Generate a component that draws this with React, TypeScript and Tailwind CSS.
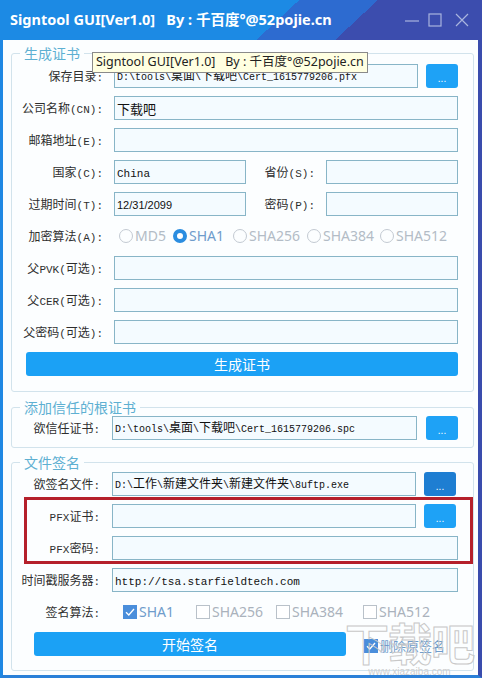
import React from 'react';

const isWide = (ch: string) => ch.charCodeAt(0) > 0xff;

// SimSun-style text: full-width glyphs at 12px, half-width ascii in mono
const Mixed: React.FC<{ text: string; big?: string; small?: string }> = ({ text, big = 'text-[12px]', small = 'text-[11px]' }) => {
    const runs: { s: string; w: boolean }[] = [];
    for (const ch of text) {
        const w = isWide(ch);
        const last = runs[runs.length - 1];
        if (last && last.w === w) last.s += ch;
        else runs.push({ s: ch, w });
    }
    return (
        <>
            {runs.map((r, i) => (
                <span
                    key={i}
                    className={r.w ? `font-['Noto_Sans_CJK_SC',sans-serif] ${big}` : `font-['Liberation_Mono',monospace] ${small}`}
                >
                    {r.s}
                </span>
            ))}
        </>
    );
};

const Label: React.FC<{ text: string; className: string }> = ({ text, className }) => (
    <div className={`flex h-6 shrink-0 items-center justify-end whitespace-pre text-[#2e2e2e] ${className}`}>
        <span className="leading-[14px]">
            <Mixed text={text} />
        </span>
    </div>
);

const Field: React.FC<{ children?: React.ReactNode; className?: string }> = ({ children, className = 'flex-1' }) => (
    <div className={`flex h-6 min-w-0 items-center overflow-hidden whitespace-pre border border-[#88b5c7] bg-[#f4fbff] pl-[2px] leading-[14px] text-[#111] ${className}`}>
        <span className="leading-[14px]">{children}</span>
    </div>
);

const Dots: React.FC<{ dark?: boolean; className?: string }> = ({ dark, className = '' }) => (
    <div
        className={`flex h-6 w-8 shrink-0 items-end justify-center rounded-[3px] pb-[4px] font-['Liberation_Sans',sans-serif] text-[10px] leading-none text-white ${dark ? 'bg-[#1e7ed2]' : 'bg-[#1ea2f6]'} ${className}`}
    >
        ...
    </div>
);

const Radio: React.FC<{ label: string; on?: boolean; className: string }> = ({ label, on, className }) => (
    <div className={`flex items-center ${className}`}>
        <span className={`h-[14px] w-[14px] shrink-0 rounded-full ${on ? 'border-[4px] border-[#2b8de0] bg-white' : 'border border-[#c3cad2]'}`} />
        <span className={`ml-[2px] font-['Noto_Sans',sans-serif] text-[14px] leading-[18px] ${on ? 'text-[#6f9ccb]' : 'text-[#b3bcc6]'}`}>{label}</span>
    </div>
);

const Check: React.FC<{ label: string; on?: boolean; className: string; text?: string }> = ({ label, on, className, text = 'text-[14px]' }) => (
    <div className={`flex items-center ${className}`}>
        <span className={`flex h-[14px] w-[14px] shrink-0 items-center justify-center ${on ? 'bg-[#4a8edb]' : 'border border-[#b9c1c9] bg-white'}`}>
            {on && (
                <svg viewBox="0 0 14 14" className="h-[14px] w-[14px]">
                    <path d="M3 7.2 L5.8 10 L11 4" fill="none" stroke="white" strokeWidth="1.3" />
                </svg>
            )}
        </span>
        <span className={`ml-[2px] font-['Noto_Sans','Noto_Sans_CJK_SC',sans-serif] leading-[18px] ${text} ${on ? 'text-[#6f9ccb]' : 'text-[#aab2bc]'}`}>{label}</span>
    </div>
);

const Legend: React.FC<{ text: string }> = ({ text }) => (
    <legend className="ml-[8px] px-[4px] font-['Noto_Sans_CJK_SC',sans-serif] text-[14px] leading-[16px] text-[#5eb0d2]">{text}</legend>
);

export default function App() {
    return (
        <div className="relative flex h-[678px] w-[482px] flex-col overflow-hidden">
            {/* title bar */}
            <div className="flex h-10 shrink-0 items-center bg-[linear-gradient(137deg,#1c8ae4_0%,#1c8ae4_57%,#2d6bd0_57%,#2d6bd0_72%,#3c4dae_72%,#3c4dae_100%)] pl-[10px] pr-[13px]">
                <div className="flex-1 whitespace-pre font-['Noto_Sans','Noto_Sans_CJK_SC',sans-serif] text-[14.5px] font-bold text-white">
                    Signtool GUI[Ver1.0]   By : 千百度°@52pojie.cn
                </div>
                <svg viewBox="0 0 14 14" className="h-[14px] w-[14px]">
                    <path d="M0 8 H14" stroke="#a9b5de" strokeWidth="1.2" />
                </svg>
                <svg viewBox="0 0 14 14" className="ml-[9px] h-[14px] w-[14px]">
                    <rect x="1" y="1" width="12" height="12" fill="none" stroke="#a9b5de" strokeWidth="1.2" />
                </svg>
                <svg viewBox="0 0 14 14" className="ml-[13px] h-[14px] w-[14px]">
                    <path d="M1 1 L13 13 M13 1 L1 13" stroke="#a9b5de" strokeWidth="1.2" />
                </svg>
            </div>

            {/* window body */}
            <div className="flex flex-1 flex-col border-b-[3px] border-l-[3px] border-r-[4px] border-b-[#2a80d8] border-l-[#1f88e3] border-r-[#3a4cad] bg-[#fcfeff] pl-[8px] pr-[4px] pt-[5px]">
                <fieldset className="rounded-[3px] border border-[#d2e3ec] pb-[15px] pr-[15px] pt-[3px]">
                    <Legend text="生成证书" />
                    <div className="flex flex-col gap-2">
                        <div className="flex">
                            <Label text="保存目录:" className="w-[102px] pr-[11px]" />
                            <Field><Mixed text="D:\tools\桌面\下载吧\Cert_1615779206.pfx" small="text-[10px]" /></Field>
                            <Dots className="ml-[8px]" />
                        </div>
                        <div className="flex">
                            <Label text="公司名称(CN):" className="w-[102px] pr-[11px]" />
                            <Field>
                                <span className="font-['Noto_Sans_CJK_SC',sans-serif] text-[13px]">下载吧</span>
                            </Field>
                        </div>
                        <div className="flex">
                            <Label text="邮箱地址(E):" className="w-[102px] pr-[11px]" />
                            <Field />
                        </div>
                        <div className="flex">
                            <Label text="国家(C):" className="w-[102px] pr-[11px]" />
                            <Field className="w-[132px]"><Mixed text="China" /></Field>
                            <Label text="省份(S):" className="w-[80px] pr-[11px]" />
                            <Field className="flex-1" />
                        </div>
                        <div className="flex">
                            <Label text="过期时间(T):" className="w-[102px] pr-[11px]" />
                            <Field className="w-[132px]">
                                <span className="font-['Liberation_Sans',sans-serif] text-[11px]">12/31/2099</span>
                            </Field>
                            <Label text="密码(P):" className="w-[80px] pr-[11px]" />
                            <Field className="flex-1" />
                        </div>
                        <div className="flex h-6 items-center">
                            <Label text="加密算法(A):" className="w-[102px] pr-[11px]" />
                            <div className="flex items-center pl-[5px]">
                                <Radio label="MD5" className="w-[54px]" />
                                <Radio label="SHA1" on className="w-[60px]" />
                                <Radio label="SHA256" className="w-[74px]" />
                                <Radio label="SHA384" className="w-[73px]" />
                                <Radio label="SHA512" className="w-[74px]" />
                            </div>
                        </div>
                        <div className="flex">
                            <Label text="父PVK(可选):" className="w-[102px] pr-[11px]" />
                            <Field />
                        </div>
                        <div className="flex">
                            <Label text="父CER(可选):" className="w-[102px] pr-[11px]" />
                            <Field />
                        </div>
                        <div className="flex">
                            <Label text="父密码(可选):" className="w-[102px] pr-[11px]" />
                            <Field />
                        </div>
                        <div className="ml-[14px] flex h-6 items-center justify-center rounded-[3px] bg-[#1ba1f5] font-['Noto_Sans_CJK_SC',sans-serif] text-[14px] leading-[16px] text-white">
                            生成证书
                        </div>
                    </div>
                </fieldset>

                <fieldset className="mt-[7px] rounded-[3px] border border-[#d2e3ec] pb-[7px] pr-[15px] pt-[1px]">
                    <Legend text="添加信任的根证书" />
                    <div className="flex">
                        <Label text="欲信任证书:" className="w-[100px] pr-[12px]" />
                        <Field><Mixed text="D:\tools\桌面\下载吧\Cert_1615779206.spc" small="text-[10px]" /></Field>
                        <Dots className="ml-[9px]" />
                    </div>
                </fieldset>

                <fieldset className="mt-[6px] rounded-[3px] border border-[#d2e3ec] pb-[14px] pr-[15px] pt-[2px]">
                    <Legend text="文件签名" />
                    <div className="flex flex-col gap-2">
                        <div className="flex">
                            <Label text="欲签名文件:" className="w-[100px] pr-[12px]" />
                            <Field><Mixed text="D:\工作\新建文件夹\新建文件夹\8uftp.exe" small="text-[10px]" /></Field>
                            <Dots dark className="ml-[8px] mr-[2px]" />
                        </div>
                        <div className="relative flex flex-col gap-2">
                            <div className="flex">
                                <Label text="PFX证书:" className="w-[100px] pr-[12px]" />
                                <Field />
                                <Dots className="ml-[8px] mr-[2px]" />
                            </div>
                            <div className="flex">
                                <Label text="PFX密码:" className="w-[100px] pr-[12px]" />
                                <Field />
                            </div>
                            {/* red highlight annotation */}
                            <div className="pointer-events-none absolute bottom-[-4px] left-[12px] right-[-15px] top-[-7px] border-[3px] border-[#b5202b]" />
                        </div>
                        <div className="flex">
                            <Label text="时间戳服务器:" className="w-[100px] pr-[12px]" />
                            <Field><Mixed text="http://tsa.starfieldtech.com" /></Field>
                        </div>
                        <div className="flex h-6 items-center">
                            <Label text="签名算法:" className="w-[100px] pr-[12px]" />
                            <div className="flex items-center pl-[11px]">
                                <Check label="SHA1" on className="w-[73px]" />
                                <Check label="SHA256" className="w-[80px]" />
                                <Check label="SHA384" className="w-[87px]" />
                                <Check label="SHA512" className="w-[70px]" />
                            </div>
                        </div>
                        <div className="flex h-6 items-center">
                            <div className="ml-[22px] flex h-6 w-[312px] items-center justify-center rounded-[3px] bg-[#1ba1f5] font-['Noto_Sans_CJK_SC',sans-serif] text-[14px] leading-[16px] text-white">
                                开始签名
                            </div>
                            <Check label="删除原签名" on className="ml-[18px] mt-[4px]" text="text-[13px]" />
                        </div>
                    </div>
                </fieldset>
            </div>

            {/* tooltip over the first group */}
            <div className="absolute left-[92px] top-[52px] flex h-[21px] items-center whitespace-pre border border-[#8a8a8a] bg-[#ffffe1] px-[3px] font-['Noto_Sans','Noto_Sans_CJK_SC',sans-serif] text-[12.5px] text-[#222]">
                Signtool GUI[Ver1.0]   By : 千百度°@52pojie.cn
            </div>

            {/* site watermark */}
            <div className="pointer-events-none absolute left-[345px] top-[614px] flex flex-col items-center">
                <div className="font-['Noto_Sans_CJK_SC',sans-serif] text-[44px] font-bold leading-[56px] tracking-[-1px] text-transparent [-webkit-text-stroke:1px_#c8c8c8]">
                    下载吧
                </div>
                <div className="-mt-[4px] font-['Liberation_Sans',sans-serif] text-[10px] leading-[12px] text-[#cfcfcf]">www.xiazaiba.com</div>
            </div>
        </div>
    );
}
